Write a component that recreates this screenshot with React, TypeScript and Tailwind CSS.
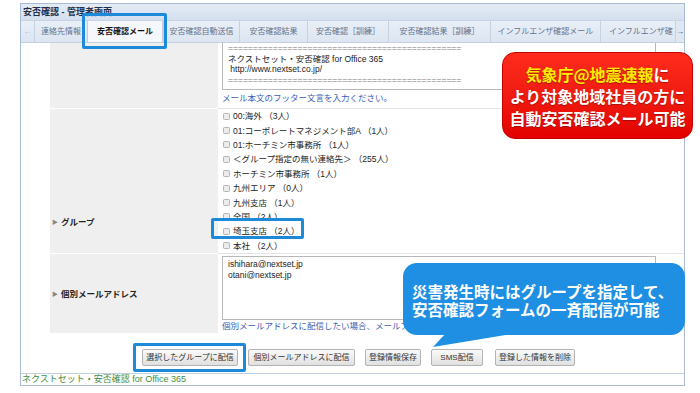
import React from 'react';

const TABS = [
  { label: '連絡先情報', w: 'w-[53px] justify-center' },
  { label: '安否確認メール', w: 'w-[76px] justify-center', active: true },
  { label: '安否確認自動送信', w: 'w-[76px] justify-center' },
  { label: '安否確認結果', w: 'w-[68px] justify-center' },
  { label: '安否確認［訓練］', w: 'w-[81px] justify-center' },
  { label: '安否確認結果［訓練］', w: 'w-[102px] justify-center' },
  { label: 'インフルエンザ確認メール', w: 'w-[110px] justify-center' },
  { label: 'インフルエンザ確', w: 'flex-1 pl-[8px]' },
];

const GROUPS = [
  '00:海外 （3人）',
  '01:コーポレートマネジメント部A （1人）',
  '01:ホーチミン市事務所 （1人）',
  '＜グループ指定の無い連絡先＞ （255人）',
  'ホーチミン市事務所 （1人）',
  '九州エリア （0人）',
  '九州支店 （1人）',
  '全国 （2人）',
  '埼玉支店 （2人）',
  '本社 （2人）',
];

const BUTTONS = [
  { label: '選択したグループに配信', w: 'w-[96px]' },
  { label: '個別メールアドレスに配信', w: 'w-[107px]' },
  { label: '登録情報保存', w: 'w-[56px]' },
  { label: 'SMS配信', w: 'w-[52px]' },
  { label: '登録した情報を削除', w: 'w-[80px] ml-[2px]' },
];

const RULE = '='.repeat(47);

const Checkbox = () => (
  <span className="inline-block w-[7px] h-[7px] border border-[#b4b4b4] bg-[#ececec] rounded-[1.5px] mr-[3px] shrink-0" />
);

const Label = ({ children }: { children: React.ReactNode }) => (
  <div className="flex items-center pl-[2px] text-[8.5px] leading-[12px] font-bold text-[#222]">
    <span className="text-[6px] text-[#888] mr-[3px]">▶</span>
    {children}
  </div>
);

export default function App() {
  return (
    <div className="relative w-[700px] h-[393px] overflow-hidden bg-white text-[#222] font-['Liberation_Sans','Noto_Sans_CJK_JP',sans-serif]">
      {/* window frame */}
      <div className="ml-[20px] mt-[3px] w-[665px] h-[383px] border border-[#a9bbd6] flex flex-col">
        <div className="h-[16px] bg-linear-to-b from-[#e4ebf5] to-[#d4dfee] pl-[2px] text-[9px] leading-[16px] font-bold text-[#1f2f4a]">
          安否確認 - 管理者画面
        </div>

        {/* tab strip */}
        <div className="h-[22px] flex bg-linear-to-b from-[#e9eff7] to-[#dce5f1] border-t border-[#c8d4e5]">
          <div className="w-[13px] flex items-center justify-center text-[8px] text-[#a8b6cc]">←</div>
          {TABS.map((t) => (
            <div
              key={t.label}
              className={`${t.w} h-full flex items-center overflow-hidden whitespace-nowrap text-[8px] ${
                t.active
                  ? 'bg-[#f5f7fb] border-x border-[#bfcde0] font-bold text-[#111]'
                  : 'border-l border-[#c5d2e4] text-[#62728c]'
              }`}
            >
              {t.label}
            </div>
          ))}
          <div className="w-[9px] flex items-center justify-center bg-[#dfe7f2] border-l border-[#c5d2e4] text-[8px] text-[#3b4a66]">→</div>
        </div>

        {/* content */}
        <div className="h-[331px] flex flex-col bg-white border-t border-[#c3d0e2]">
          <div className="pl-[29px] grid grid-cols-[168px_1fr] text-[8.5px]">
            {/* footer text row */}
            <div className="h-[65px] bg-[#efefef]" />
            <div className="h-[65px] pl-[4px] pr-[28px]">
              <div className="h-[47px] border-x border-b border-[#b8b8b8] pl-[5px] leading-[10.7px] text-[#222]">
                <div className="whitespace-nowrap text-[#777]">{RULE}</div>
                <div>ネクストセット・安否確認 for Office 365</div>
                <div>&nbsp;http://www.nextset.co.jp/</div>
                <div className="whitespace-nowrap text-[#777]">{RULE}</div>
              </div>
              <div className="mt-[2px] leading-[12px] text-[#3a5cb6]">メール本文のフッター文言を入力ください。</div>
            </div>

            {/* group row */}
            <div className="h-[145px] bg-[#efefef] border-t border-white pt-[107px]">
              <Label>グループ</Label>
            </div>
            <div className="h-[145px] border-t border-[#e4e4e4] pl-[5px]">
              {GROUPS.map((g) => (
                <div key={g} className="h-[14.4px] flex items-center leading-[12px] text-[#222] whitespace-nowrap">
                  <Checkbox />
                  {g}
                </div>
              ))}
            </div>

            {/* address row */}
            <div className="h-[80px] bg-[#efefef] border-t border-white flex items-center">
              <Label>個別メールアドレス</Label>
            </div>
            <div className="h-[80px] border-t border-[#e4e4e4] pl-[4px] pr-[28px]">
              <div className="mt-[2px] h-[64px] border border-[#b8b8b8] pl-[5px] pt-[2px] leading-[10.5px] text-[#222]">
                <div>ishihara@nextset.jp</div>
                <div>otani@nextset.jp</div>
              </div>
              <div className="leading-[12px] text-[#3a5cb6] whitespace-nowrap">
                個別メールアドレスに配信したい場合、メールアドレスを入力
              </div>
            </div>
          </div>

          {/* buttons */}
          <div className="pt-[16px] pl-[121px] flex gap-[10px]">
            {BUTTONS.map((b) => (
              <div
                key={b.label}
                className={`${b.w} h-[17px] flex items-center justify-center rounded-[2px] border border-[#b3b3b3] bg-linear-to-b from-[#fafafa] to-[#e0e0e0] text-[8px] text-[#333] whitespace-nowrap`}
              >
                {b.label}
              </div>
            ))}
          </div>
        </div>

        {/* footer */}
        <div className="h-[12px] border-t border-[#c3d0e2] pl-[1px] text-[9px] leading-[11px] text-[#3f8d3f]">
          ネクストセット・安否確認 for Office 365
        </div>
      </div>

      {/* highlight boxes */}
      <div className="absolute left-[82px] top-[13px] w-[85px] h-[36px] border-[3px] border-[#1c8ad8] rounded-[2px]" />
      <div className="absolute left-[211px] top-[218px] w-[93px] h-[21px] border-[3px] border-[#1c8ad8] rounded-[2px]" />
      <div className="absolute left-[133px] top-[343px] w-[113px] h-[29px] border-[3px] border-[#1c8ad8] rounded-[2px]" />

      {/* red callout */}
      <div className="absolute left-[502px] top-[52px] w-[191px] h-[87px] rounded-[13px] bg-linear-to-b from-[#ff2b1c] to-[#e20000] border border-[#c40000] flex flex-col items-center justify-center text-[16px] leading-[22px] font-bold text-white font-['Noto_Sans_CJK_JP',sans-serif] [text-shadow:0_1px_1px_rgba(90,0,0,0.45)]">
        <div>
          <span className="text-[#ffec00]">気象庁@地震速報</span>に
        </div>
        <div>より対象地域社員の方に</div>
        <div>自動安否確認メール可能</div>
      </div>

      {/* blue callout */}
      <svg className="absolute left-[425px] top-[332px]" width="100" height="18" viewBox="0 0 100 18">
        <polygon points="8,15 22,0 98,0" fill="#1e8fe3" />
      </svg>
      <div className="absolute left-[403px] top-[263px] w-[282px] h-[72px] rounded-[14px] bg-[#1e8fe3] pl-[9px] pt-[20px] text-[15.5px] leading-[17.5px] font-bold text-white font-['Noto_Sans_CJK_JP',sans-serif] whitespace-nowrap">
        <div>災害発生時にはグループを指定して、</div>
        <div>安否確認フォームの一斉配信が可能</div>
      </div>
    </div>
  );
}
